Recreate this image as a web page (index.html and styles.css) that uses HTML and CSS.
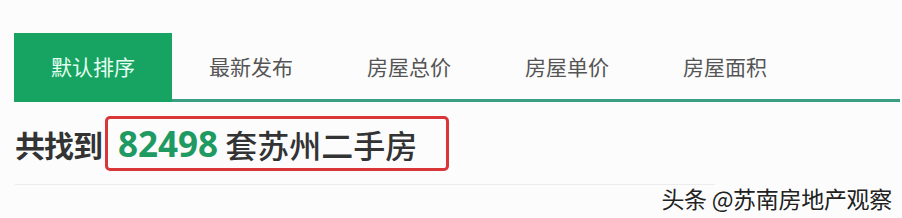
FILE: index.html
```html
<!DOCTYPE html>
<html lang="zh">
<head>
<meta charset="utf-8">
<link rel="stylesheet" href="styles.css">
</head>
<body>
<div class="page">
  <nav class="tabs">
    <div class="tab active">默认排序</div>
    <div class="tab">最新发布</div>
    <div class="tab">房屋总价</div>
    <div class="tab">房屋单价</div>
    <div class="tab">房屋面积</div>
  </nav>
  <h2 class="result">
    <span class="lead">共找到</span><span class="mark"><span class="num">82498</span> 套苏州二手房</span>
  </h2>
  <div class="divider"></div>
  <div class="foot"><span class="wm">头条 @苏南房地产观察</span></div>
</div>
</body>
</html>
```

FILE: styles.css
```css
* { box-sizing: border-box; }
html, body { margin: 0; padding: 0; }
body {
  width: 902px;
  height: 218px;
  background: #fcfcfd;
  font-family: "Noto Sans CJK SC", "Noto Sans", sans-serif;
  overflow: hidden;
}
.page {
  padding: 33px 2px 0 14px;
}
.tabs {
  display: flex;
  height: 69px;
  border-bottom: 3px solid #3a9f82;
}
.tab {
  width: 158px;
  height: 69px;
  display: flex;
  align-items: center;
  justify-content: center;
  padding-bottom: 3px;
  font-size: 21px;
  color: #555;
}
.tab.active {
  background: #17a462;
  color: #e6fff2;
}
.result {
  margin: 14px 0 0 1px;
  display: flex;
  align-items: center;
  font-size: 30px;
  font-weight: 700;
  color: #333;
  line-height: 1;
}
.lead { letter-spacing: -1px; }
.mark {
  display: inline-flex;
  align-items: center;
  height: 55px;
  margin-left: 3px;
  padding: 0 29px 0 10px;
  border: 3px solid #d9363a;
  border-radius: 5px;
  font-weight: 500;
  font-size: 32px;
  white-space: pre;
}
.num {
  color: #1f9a62;
  font-family: "Open Sans", "Noto Sans", sans-serif;
  font-weight: 700;
  font-size: 35px;
}
.divider {
  margin-top: 13px;
  height: 1px;
  background: #ececee;
  width: 700px;
  margin-left: 1px;
}
.foot {
  display: flex;
  justify-content: flex-end;
  padding-right: 8px;
  margin-top: -4px;
}
.wm {
  font-size: 23px;
  color: #222;
  text-shadow: 1px 1px 0 #fff, -1px -1px 0 #fff;
  letter-spacing: -0.3px;
}
```
